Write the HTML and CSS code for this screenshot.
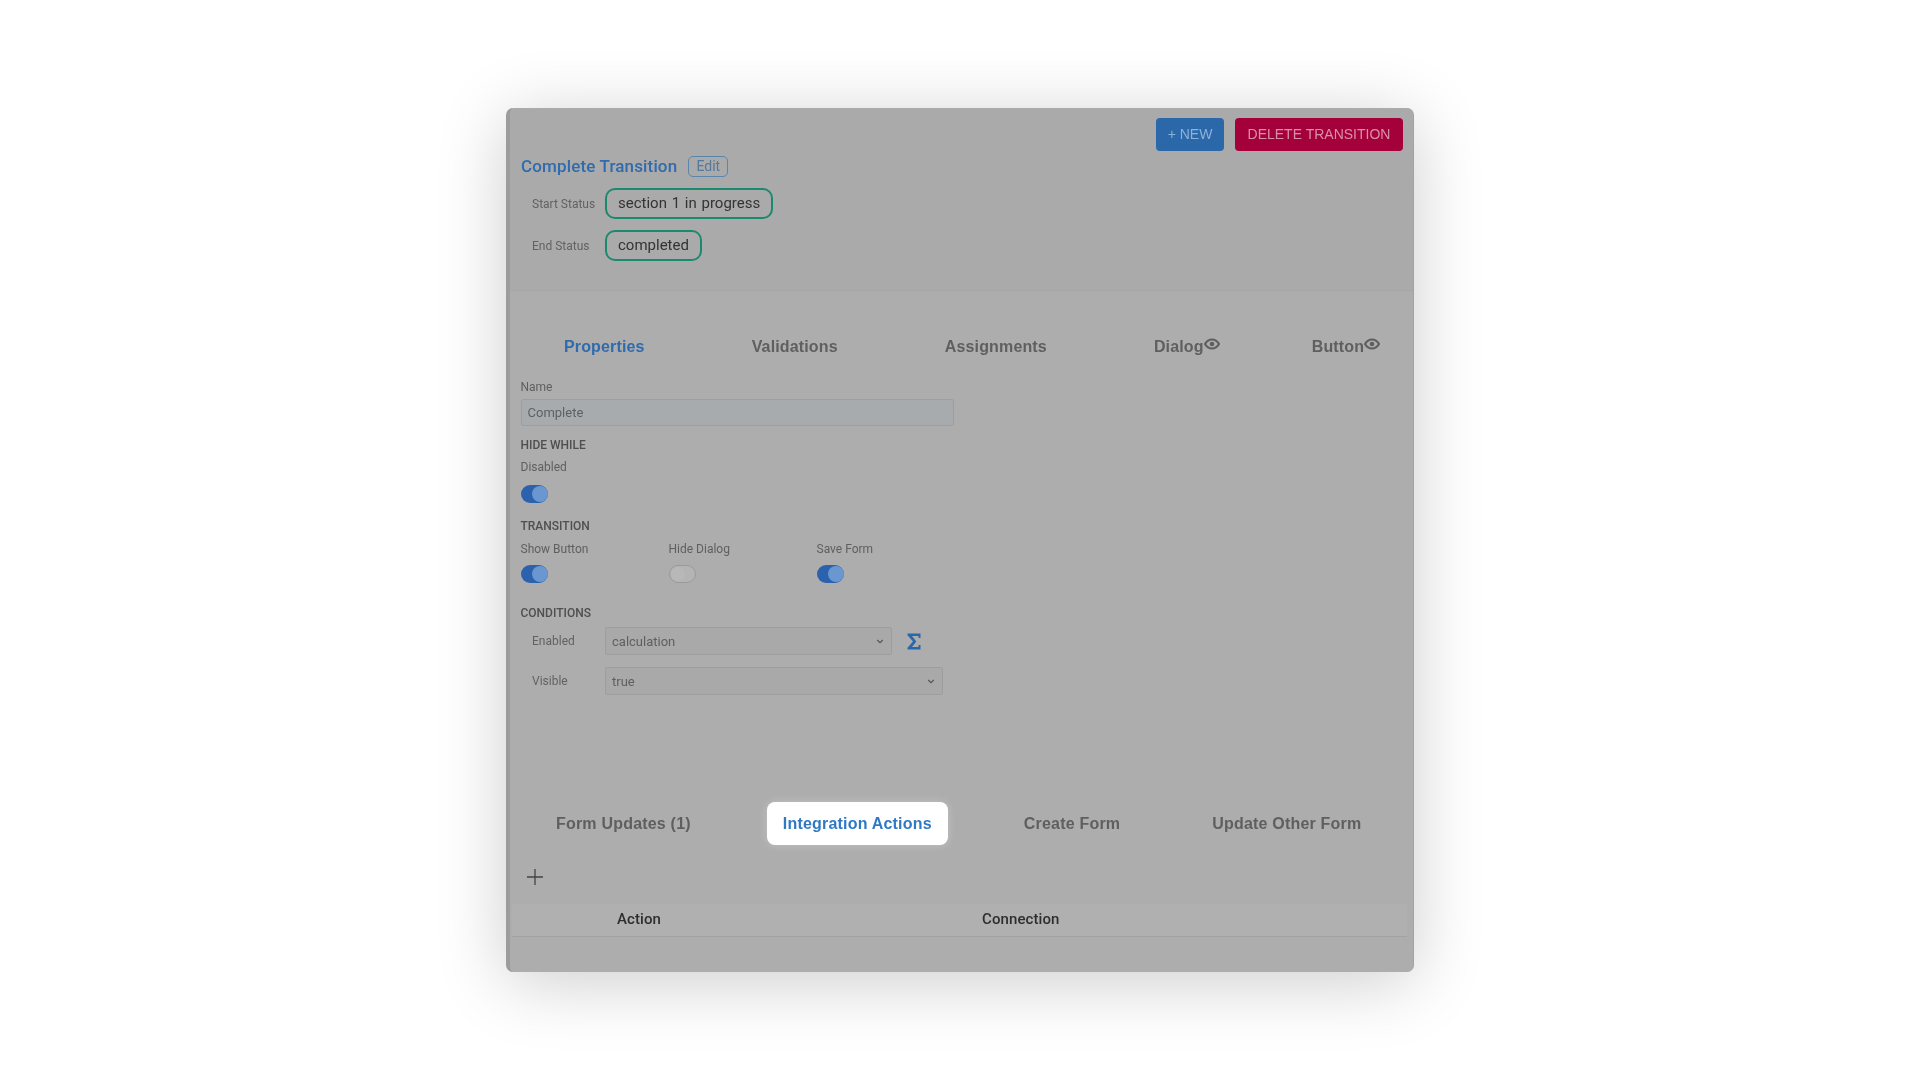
FILE: index.html
```html
<!DOCTYPE html>
<html lang="en">
<head>
    <meta charset="UTF-8" />
    <title>Complete Transition</title>
    <link rel="stylesheet" href="styles.css">
</head>
<body>

    <div class="card">
        <div class="card-head">
            <div class="head-actions">
                <button class="btn btn-new">+ NEW</button>
                <button class="btn btn-delete">DELETE TRANSITION</button>
            </div>
            <div class="title-row">
                <span class="title">Complete Transition</span>
                <span class="edit-chip">Edit</span>
            </div>
            <div class="status-row">
                <span class="row-label">Start Status</span>
                <span class="status-pill">section 1 in progress</span>
            </div>
            <div class="status-row">
                <span class="row-label">End Status</span>
                <span class="status-pill">completed</span>
            </div>
        </div>

        <div class="tabs top-tabs">
            <span class="tab tab-current">Properties</span>
            <span class="tab">Validations</span>
            <span class="tab">Assignments</span>
            <span class="tab">Dialog<svg class="eye" viewBox="0 0 16 12"><path d="M1 6c1.8-3 4.200-4.500 7-4.500S13.200 3 15 6c-1.800 3-4.200 4.500-7 4.500S2.800 9 1 6z" fill="none" stroke="#5f5f5f" stroke-width="2.200"/><circle cx="8" cy="6" r="2.300" fill="#5f5f5f"/></svg></span>
            <span class="tab tab-last">Button<svg class="eye" viewBox="0 0 16 12"><path d="M1 6c1.8-3 4.200-4.500 7-4.500S13.200 3 15 6c-1.800 3-4.200 4.500-7 4.500S2.800 9 1 6z" fill="none" stroke="#5f5f5f" stroke-width="2.200"/><circle cx="8" cy="6" r="2.300" fill="#5f5f5f"/></svg></span>
        </div>

        <div class="form">
            <div class="field-label name-label">Name</div>
            <div class="text-input">Complete</div>

            <div class="section-label hide-label">HIDE WHILE</div>
            <div class="field-label disabled-label">Disabled</div>
            <div class="toggle toggle-single on"></div>

            <div class="section-label transition-label">TRANSITION</div>
            <div class="toggle-grid">
                <div class="toggle-cell">
                    <div class="field-label">Show Button</div>
                    <div class="toggle on"></div>
                </div>
                <div class="toggle-cell">
                    <div class="field-label">Hide Dialog</div>
                    <div class="toggle"></div>
                </div>
                <div class="toggle-cell">
                    <div class="field-label">Save Form</div>
                    <div class="toggle on"></div>
                </div>
            </div>

            <div class="section-label conditions-label">CONDITIONS</div>
            <div class="cond-row cond-enabled">
                <span class="row-label">Enabled</span>
                <div class="select select-short">
                    <span>calculation</span>
                    <svg class="chevron" viewBox="0 0 10 6"><path d="M1.500 1.200 5 4.500l3.500-3.300" fill="none" stroke="#555" stroke-width="1.500"/></svg>
                </div>
                <svg class="sigma" viewBox="0 0 14 17"><path d="M0.500 0.500h13v4.500h-2V3H5l4.300 5.500L5 14h6.500v-2h2v4.500H0.500v-1.800L6 8.500 0.500 2.300z" fill="#2a68ad"/></svg>
            </div>
            <div class="cond-row cond-visible">
                <span class="row-label">Visible</span>
                <div class="select select-long">
                    <span>true</span>
                    <svg class="chevron" viewBox="0 0 10 6"><path d="M1.500 1.200 5 4.500l3.500-3.300" fill="none" stroke="#555" stroke-width="1.500"/></svg>
                </div>
            </div>
        </div>

        <div class="tabs bottom-tabs">
            <span class="tab">Form Updates (1)</span>
            <span class="tab tab-active">Integration Actions</span>
            <span class="tab">Create Form</span>
            <span class="tab">Update Other Form</span>
        </div>

        <svg class="plus" viewBox="0 0 16 16"><path d="M8 0v16M0 8h16" stroke="#444" stroke-width="1.300" fill="none"/></svg>

        <div class="table-head">
            <span>Action</span>
            <span>Connection</span>
        </div>
    </div>

</body>
</html>
```

FILE: styles.css
```css
body {
    margin: 0;
    height: 1080px;
    display: flex;
    align-items: center;
    justify-content: center;
    background-color: #ffffff;
    font-family: "Roboto", "Liberation Sans", sans-serif;
    overflow: hidden;
}

.card {
    box-sizing: border-box;
    width: 908px;
    height: 864px;
    background-color: #adadad;
    border-left: 4px solid #9c9c9c;
    border-right: 1px solid #a3a3a3;
    border-radius: 7px;
    box-shadow: 0 10px 70px rgba(0, 0, 0, 0.2);
    color: #5f5f5f;
    filter: blur(0.5px);
}

.card-head {
    box-sizing: border-box;
    height: 183px;
    padding: 10px 10px 0 11px;
    background-color: #aaaaaa;
    border-bottom: 1px solid #a6a6a6;
    border-radius: 7px 7px 0 0;
}

.head-actions {
    display: flex;
    justify-content: flex-end;
    gap: 11px;
}

.btn {
    height: 33px;
    padding: 0 0 1px;
    border: none;
    border-radius: 4px;
    font-family: "Liberation Sans", Arial, sans-serif;
    font-size: 14px;
}

.btn-new {
    width: 68px;
    background-color: #2a68aa;
    color: #8db2d8;
}

.btn-delete {
    width: 168px;
    background-color: #a4003a;
    color: #d990a9;
}

.title-row {
    display: flex;
    align-items: center;
    gap: 11px;
    margin-top: 5px;
    height: 21px;
}

.title {
    padding-bottom: 2px;
    font-size: 17px;
    font-weight: 500;
    letter-spacing: 0.15px;
    color: #2f6bad;
}

.edit-chip {
    box-sizing: border-box;
    width: 40px;
    height: 21px;
    border: 1px solid #5c85ab;
    border-radius: 5px;
    font-size: 14px;
    line-height: 19px;
    text-align: center;
    color: #55799c;
}

.status-row {
    display: flex;
    align-items: center;
    padding-left: 11px;
    margin-top: 11px;
}

.row-label {
    width: 73px;
    font-size: 12px;
    color: #626262;
}

.status-pill {
    box-sizing: border-box;
    height: 31px;
    padding: 0 11px;
    border: 2px solid #1b8a6c;
    border-radius: 10px;
    font-size: 15px;
    line-height: 27px;
    word-spacing: 1px;
    color: #333333;
}

.tabs {
    display: flex;
    align-items: center;
}

.tab {
    display: flex;
    align-items: center;
    padding: 0 16px;
    font-family: "Liberation Sans", Arial, sans-serif;
    font-size: 16px;
    font-weight: bold;
    letter-spacing: 0.15px;
    color: #5f5f5f;
}

.top-tabs {
    height: 40px;
    margin-top: 36px;
    padding-left: 38px;
    gap: 75px;
}

.tab-current {
    color: #2f6bad;
}

.tab-last {
    margin-left: -15px;
}

.eye {
    width: 16px;
    height: 12px;
    margin-bottom: 7px;
}

.form {
    padding-left: 10.500px;
}

.field-label,
.section-label {
    height: 14px;
    font-size: 12px;
    line-height: 14px;
}

.section-label {
    font-weight: 500;
    color: #4f4f4f;
}

.name-label { padding-top: 13px; }
.hide-label { margin-top: 12px; }
.disabled-label { margin-top: 8px; }
.transition-label { margin-top: 16px; }
.conditions-label { margin-top: 23px; }

.text-input {
    box-sizing: border-box;
    width: 433px;
    height: 27px;
    margin-top: 5px;
    padding-left: 6px;
    border: 1px solid #9c9fa2;
    background-color: #a8abae;
    border-radius: 2px;
    font-size: 13px;
    line-height: 25px;
    color: #5f5f5f;
}

.toggle {
    position: relative;
    box-sizing: border-box;
    width: 27px;
    height: 18px;
    margin-top: 9px;
    border: 1px solid #9a9a9a;
    border-radius: 9px;
    background-color: #b4b4b4;
}

.toggle::after {
    content: "";
    position: absolute;
    top: 1px;
    left: 1px;
    width: 14px;
    height: 14px;
    border-radius: 50%;
    background-color: #b8b8b8;
}

.toggle.on {
    border: none;
    background-color: #2c62ad;
}

.toggle.on::after {
    top: 1px;
    left: 11px;
    width: 16px;
    height: 16px;
    background-color: #6a97d0;
}

.toggle-single {
    margin-top: 11px;
}

.toggle-grid {
    display: grid;
    grid-template-columns: repeat(3, 148px);
    margin-top: 9px;
}

.cond-row {
    display: flex;
    align-items: center;
    padding-left: 11.500px;
}

.cond-enabled { margin-top: 7px; }
.cond-visible { margin-top: 12px; }

.select {
    box-sizing: border-box;
    display: flex;
    align-items: center;
    justify-content: space-between;
    height: 28px;
    padding: 0 7px 0 6px;
    border: 1px solid #9d9d9d;
    border-radius: 2px;
    background-color: #a9a9a9;
    font-size: 13px;
    color: #5f5f5f;
}

.select-short { width: 287px; }
.select-long { width: 338px; }

.chevron {
    width: 8px;
    height: 5px;
}

.sigma {
    width: 14px;
    height: 17px;
    margin-left: 15px;
}

.bottom-tabs {
    height: 43px;
    margin-top: 107px;
    padding-left: 30px;
    gap: 60px;
}

.bottom-tabs .tab {
    letter-spacing: 0.2px;
}

.tab-active {
    align-self: stretch;
    background-color: #ffffff;
    border-radius: 8px;
    color: #2f79c4;
    box-shadow: 0 0 10px rgba(255, 255, 255, 0.25);
}

.plus {
    display: block;
    width: 16px;
    height: 16px;
    margin: 24px 0 0 17px;
}

.table-head {
    box-sizing: border-box;
    display: grid;
    grid-template-columns: 365px 1fr;
    align-items: center;
    height: 33px;
    margin: 19px 6px 0 2px;
    padding: 0 0 2px 105px;
    background-color: #b0b0b0;
    border-bottom: 1px solid #a2a2a2;
    font-size: 15px;
    font-weight: 500;
    letter-spacing: 0.1px;
    color: #2e2e2e;
}
```
